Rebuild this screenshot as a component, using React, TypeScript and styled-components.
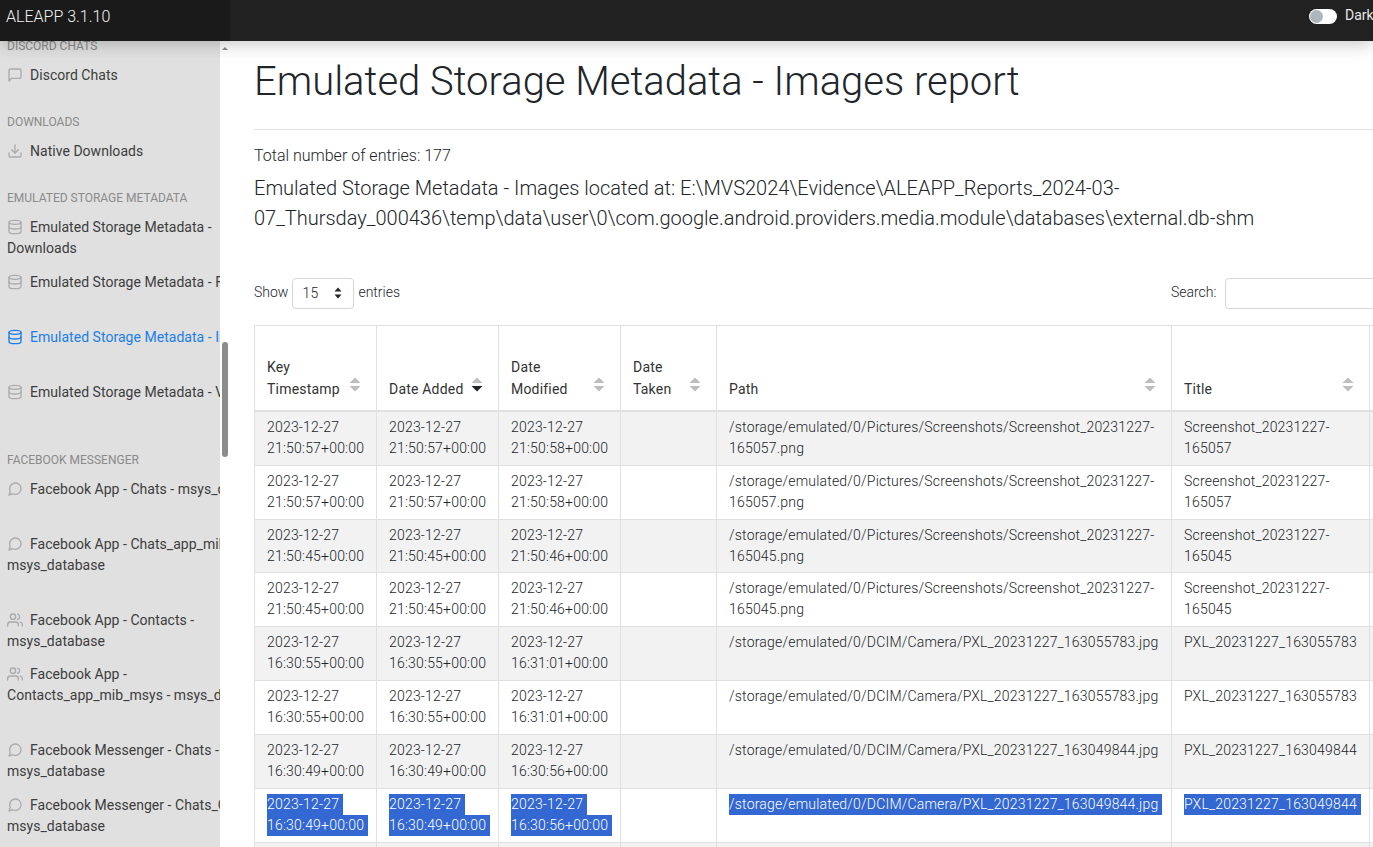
import React from "react";
import styled, { createGlobalStyle } from "styled-components";
import {
  FiDatabase,
  FiDownload,
  FiMessageCircle,
  FiMessageSquare,
  FiUsers,
} from "react-icons/fi";

const GlobalStyle = createGlobalStyle`
  html, body {
    margin: 0;
    height: 100%;
    overflow: hidden;
    background: #fff;
    font-family: Roboto, "Liberation Sans", sans-serif;
    color: #212529;
  }
`;

const Page = styled.div`
  display: flex;
  flex-direction: column;
  height: 100vh;
  overflow: hidden;
`;

const TopBar = styled.header`
  position: relative;
  z-index: 2;
  flex: 0 0 41px;
  display: flex;
  align-items: stretch;
  justify-content: space-between;
  background: #212121;
  box-shadow: 0 2px 18px rgba(0, 0, 0, 0.25);
`;
const Brand = styled.div`
  width: 224px;
  padding-left: 6px;
  background: #1a1a1a;
  color: #f2f2f2;
  font-size: 16px;
  font-weight: 300;
  line-height: 33px;
`;
const DarkToggle = styled.label`
  display: flex;
  align-items: flex-start;
  gap: 8px;
  width: 64px;
  padding-top: 5px;
  overflow: hidden;
  color: #e6e6e6;
  font-size: 14px;
  line-height: 21px;
`;
const ToggleTrack = styled.span`
  flex: none;
  display: flex;
  align-items: center;
  width: 28px;
  height: 15px;
  margin-top: 4px;
  padding: 0 1px;
  box-sizing: border-box;
  border-radius: 8px;
  background: #fff;
`;
const ToggleKnob = styled.span`
  width: 13px;
  height: 13px;
  border-radius: 50%;
  background: #adb5bd;
`;

const Body = styled.div`
  flex: 1;
  min-height: 0;
  display: flex;
`;

const Sidebar = styled.nav`
  flex: 0 0 220px;
  width: 220px;
  overflow: hidden;
  background: #e0e0e0;
`;
const SideList = styled.div`
  margin-top: -25px;
`;
const SideHeading = styled.div`
  padding: 21px 7px 3px;
  color: #8a8a8a;
  font-size: 12px;
  font-weight: 400;
  line-height: 18px;
  text-transform: uppercase;
  white-space: nowrap;
`;
const SideItem = styled.a<{ $height: number; $active?: boolean }>`
  display: block;
  box-sizing: border-box;
  height: ${(p) => p.$height}px;
  padding: 6.5px 7px;
  color: ${(p) => (p.$active ? "#1b7ee8" : "#3d3d3d")};
  font-size: 14px;
  line-height: 21px;
  letter-spacing: 0.03px;
  white-space: nowrap;
  svg {
    width: 16px;
    height: 16px;
    margin-right: 7px;
    vertical-align: -3px;
    stroke-width: 2;
    color: ${(p) => (p.$active ? "#1b7ee8" : "#ababab")};
  }
`;

const ScrollTrack = styled.div`
  flex: 0 0 10px;
  display: flex;
  flex-direction: column;
  align-items: center;
  background: #fff;
`;
const ScrollArrow = styled.span`
  width: 0;
  height: 0;
  margin-top: 6px;
  border-left: 3px solid transparent;
  border-right: 3px solid transparent;
  border-bottom: 3px solid #8a8a8a;
`;
const ScrollThumb = styled.span`
  width: 6px;
  height: 115px;
  margin-top: 292px;
  border-radius: 3px;
  background: #8c8c8c;
`;

const Main = styled.main`
  flex: 1;
  min-width: 0;
  overflow: hidden;
  padding-left: 24px;
`;
const Content = styled.div`
  width: 1171px;
`;
const Title = styled.h1`
  margin: 17px 0 23px;
  font-size: 40px;
  font-weight: 300;
  line-height: 48px;
  letter-spacing: -0.02px;
`;
const Divider = styled.hr`
  margin: 0 0 14px;
  border: 0;
  border-top: 1px solid #e0e0e0;
`;
const EntryCount = styled.div`
  font-size: 16px;
  font-weight: 300;
  line-height: 24px;
`;
const Location = styled.div`
  margin-top: 5px;
  font-size: 20px;
  font-weight: 300;
  line-height: 30px;
`;

const TableTools = styled.div`
  display: flex;
  justify-content: space-between;
  align-items: flex-start;
  margin: 45px 0 16px;
  font-size: 14px;
  font-weight: 300;
  line-height: 28px;
`;
const ToolGroup = styled.label`
  display: flex;
  align-items: flex-start;
  gap: 4px;
  color: #212529;
`;
const PageSize = styled.span`
  display: flex;
  align-items: center;
  justify-content: space-between;
  box-sizing: border-box;
  width: 62px;
  height: 31px;
  padding: 0 10px 1px 9px;
  border: 1px solid #d6d6d6;
  border-radius: 4px;
  font-size: 14px;
  letter-spacing: 0.3px;
  svg {
    width: 10px;
    height: 14px;
  }
`;
const SearchBox = styled.span`
  display: block;
  box-sizing: border-box;
  width: 200px;
  height: 31px;
  margin-left: 4.6px;
  border: 1px solid #d6d6d6;
  border-radius: 4px;
`;

const Grid = styled.table`
  width: 1300px;
  table-layout: fixed;
  border-collapse: collapse;
  font-size: 14px;
  line-height: 21px;
  letter-spacing: 0.2px;
`;
const HeadCell = styled.th`
  position: relative;
  height: 85px;
  padding: 0 30px 10px 12px;
  box-sizing: border-box;
  border: 1px solid #e0e0e0;
  border-bottom: 2px solid #e0e0e0;
  font-weight: 400;
  line-height: 22px;
  text-align: left;
  vertical-align: bottom;
  color: #333;
`;
const SortMark = styled.svg`
  position: absolute;
  right: 15px;
  bottom: 18px;
  width: 12px;
  height: 15px;
`;
const Row = styled.tr<{ $striped: boolean; $height: number }>`
  height: ${(p) => p.$height}px;
  background: ${(p) => (p.$striped ? "#f2f2f2" : "#fff")};
`;
const Cell = styled.td`
  padding: 5px 12px 5px;
  box-sizing: border-box;
  border: 1px solid #e0e0e0;
  font-weight: 300;
  vertical-align: top;
  color: #212529;
`;
const Picked = styled.span`
  display: inline-block;
  padding-right: 4px;
  background: #3367d1;
  color: #fff;
  font-weight: 300;
  vertical-align: top;
  white-space: nowrap;
`;

type NavEntry =
  | { heading: string }
  | {
      icon: React.ReactNode;
      lines: string[];
      height: number;
      active?: boolean;
    };

const NAV: NavEntry[] = [
  { heading: "Discord Chats" },
  { icon: <FiMessageSquare />, lines: ["Discord Chats"], height: 34 },
  { heading: "Downloads" },
  { icon: <FiDownload />, lines: ["Native Downloads"], height: 34 },
  { heading: "Emulated Storage Metadata" },
  {
    icon: <FiDatabase />,
    lines: ["Emulated Storage Metadata -", "Downloads"],
    height: 55,
  },
  { icon: <FiDatabase />, lines: ["Emulated Storage Metadata - Files"], height: 55 },
  {
    icon: <FiDatabase />,
    lines: ["Emulated Storage Metadata - Images"],
    height: 55,
    active: true,
  },
  { icon: <FiDatabase />, lines: ["Emulated Storage Metadata - Videos"], height: 55 },
  { heading: "Facebook Messenger" },
  {
    icon: <FiMessageCircle />,
    lines: ["Facebook App - Chats - msys_database"],
    height: 55,
  },
  {
    icon: <FiMessageCircle />,
    lines: ["Facebook App - Chats_app_mib_msys -", "msys_database"],
    height: 76,
  },
  {
    icon: <FiUsers />,
    lines: ["Facebook App - Contacts -", "msys_database"],
    height: 54,
  },
  {
    icon: <FiUsers />,
    lines: ["Facebook App -", "Contacts_app_mib_msys - msys_database"],
    height: 76,
  },
  {
    icon: <FiMessageCircle />,
    lines: ["Facebook Messenger - Chats -", "msys_database"],
    height: 55,
  },
  {
    icon: <FiMessageCircle />,
    lines: ["Facebook Messenger - Chats_Group -", "msys_database"],
    height: 55,
  },
];

const COLUMNS = [
  { label: "Key Timestamp", width: 122 },
  { label: "Date Added", width: 122, sorted: true },
  { label: "Date Modified", width: 122 },
  { label: "Date Taken", width: 96 },
  { label: "Path", width: 455 },
  { label: "Title", width: 198 },
  { label: "", width: 185 },
];

const makeRow = (
  key: string,
  added: string,
  modified: string,
  path: string[],
  title: string[],
) => [
  ["2023-12-27", key],
  ["2023-12-27", added],
  ["2023-12-27", modified],
  [],
  path,
  title,
  [],
];

const shotsRow = (k: string, m: string, id: string) =>
  makeRow(
    k,
    k,
    m,
    [
      "/storage/emulated/0/Pictures/Screenshots/Screenshot_20231227-",
      `${id}.png`,
    ],
    ["Screenshot_20231227-", id],
  );

const cameraRow = (k: string, m: string, id: string) =>
  makeRow(
    k,
    k,
    m,
    [`/storage/emulated/0/DCIM/Camera/PXL_${id}.jpg`],
    [`PXL_${id}`],
  );

const ROWS = [
  shotsRow("21:50:57+00:00", "21:50:58+00:00", "165057"),
  shotsRow("21:50:57+00:00", "21:50:58+00:00", "165057"),
  shotsRow("21:50:45+00:00", "21:50:46+00:00", "165045"),
  shotsRow("21:50:45+00:00", "21:50:46+00:00", "165045"),
  cameraRow("16:30:55+00:00", "16:31:01+00:00", "20231227_163055783"),
  cameraRow("16:30:55+00:00", "16:31:01+00:00", "20231227_163055783"),
  cameraRow("16:30:49+00:00", "16:30:56+00:00", "20231227_163049844"),
  cameraRow("16:30:49+00:00", "16:30:56+00:00", "20231227_163049844"),
];

// the source rows are 53.75px tall, a table only takes whole pixels
const ROW_HEIGHTS = [55, 54, 53, 54, 54, 54, 54, 54];

const SortIcon: React.FC<{ active?: boolean }> = ({ active }) => (
  <SortMark viewBox="0 0 12 15">
    <path d="M6 0.5 L11.5 6 H0.5 Z" fill="#bdbdbd" />
    <path d="M6 14.5 L11.5 9 H0.5 Z" fill={active ? "#212529" : "#bdbdbd"} />
  </SortMark>
);

const App: React.FC = () => {
  return (
    <Page>
      <GlobalStyle />
      <TopBar>
        <Brand>ALEAPP 3.1.10</Brand>
        <DarkToggle>
          <ToggleTrack>
            <ToggleKnob />
          </ToggleTrack>
          Dark
        </DarkToggle>
      </TopBar>
      <Body>
        <Sidebar>
          <SideList>
            {NAV.map((entry, i) =>
              "heading" in entry ? (
                <SideHeading key={i}>{entry.heading}</SideHeading>
              ) : (
                <SideItem key={i} $height={entry.height} $active={entry.active}>
                  {entry.icon}
                  {entry.lines.map((line, n) => (
                    <React.Fragment key={n}>
                      {n > 0 && <br />}
                      {line}
                    </React.Fragment>
                  ))}
                </SideItem>
              ),
            )}
          </SideList>
        </Sidebar>
        <ScrollTrack>
          <ScrollArrow />
          <ScrollThumb />
        </ScrollTrack>
        <Main>
          <Content>
            <Title>Emulated Storage Metadata - Images report</Title>
            <Divider />
            <EntryCount>Total number of entries: 177</EntryCount>
            <Location>
              Emulated Storage Metadata - Images located at:
              E:\MVS2024\Evidence\ALEAPP_Reports_2024-03-07_Thursday_000436\temp\data\user\0\com.google.android.providers.media.module\databases\external.db-shm
            </Location>
            <TableTools>
              <ToolGroup>
                Show
                <PageSize>
                  15
                  <svg viewBox="0 0 10 14">
                    <path d="M5 1.5 L8.5 5.5 H1.5 Z" fill="#212529" />
                    <path d="M5 12.5 L8.5 8.5 H1.5 Z" fill="#212529" />
                  </svg>
                </PageSize>
                entries
              </ToolGroup>
              <ToolGroup>
                Search:
                <SearchBox />
              </ToolGroup>
            </TableTools>
            <Grid>
              <colgroup>
                {COLUMNS.map((c) => (
                  <col key={c.label} style={{ width: c.width }} />
                ))}
              </colgroup>
              <thead>
                <tr>
                  {COLUMNS.map((c) => (
                    <HeadCell key={c.label}>
                      {c.label}
                      {c.label && <SortIcon active={c.sorted} />}
                    </HeadCell>
                  ))}
                </tr>
              </thead>
              <tbody>
                {ROWS.map((row, r) => (
                  <Row key={r} $striped={r % 2 === 0} $height={ROW_HEIGHTS[r]}>
                    {row.map((lines, c) => (
                      <Cell key={c}>
                        {r === ROWS.length - 1
                          ? lines.map((line, n) => (
                              <React.Fragment key={n}>
                                <Picked>{line}</Picked>
                                {n < lines.length - 1 && <br />}
                              </React.Fragment>
                            ))
                          : lines.join(" ")}
                      </Cell>
                    ))}
                  </Row>
                ))}
                <Row $striped $height={54}>
                  {COLUMNS.map((c) => (
                    <Cell key={c.label} />
                  ))}
                </Row>
              </tbody>
            </Grid>
          </Content>
        </Main>
      </Body>
    </Page>
  );
};

export default App;
